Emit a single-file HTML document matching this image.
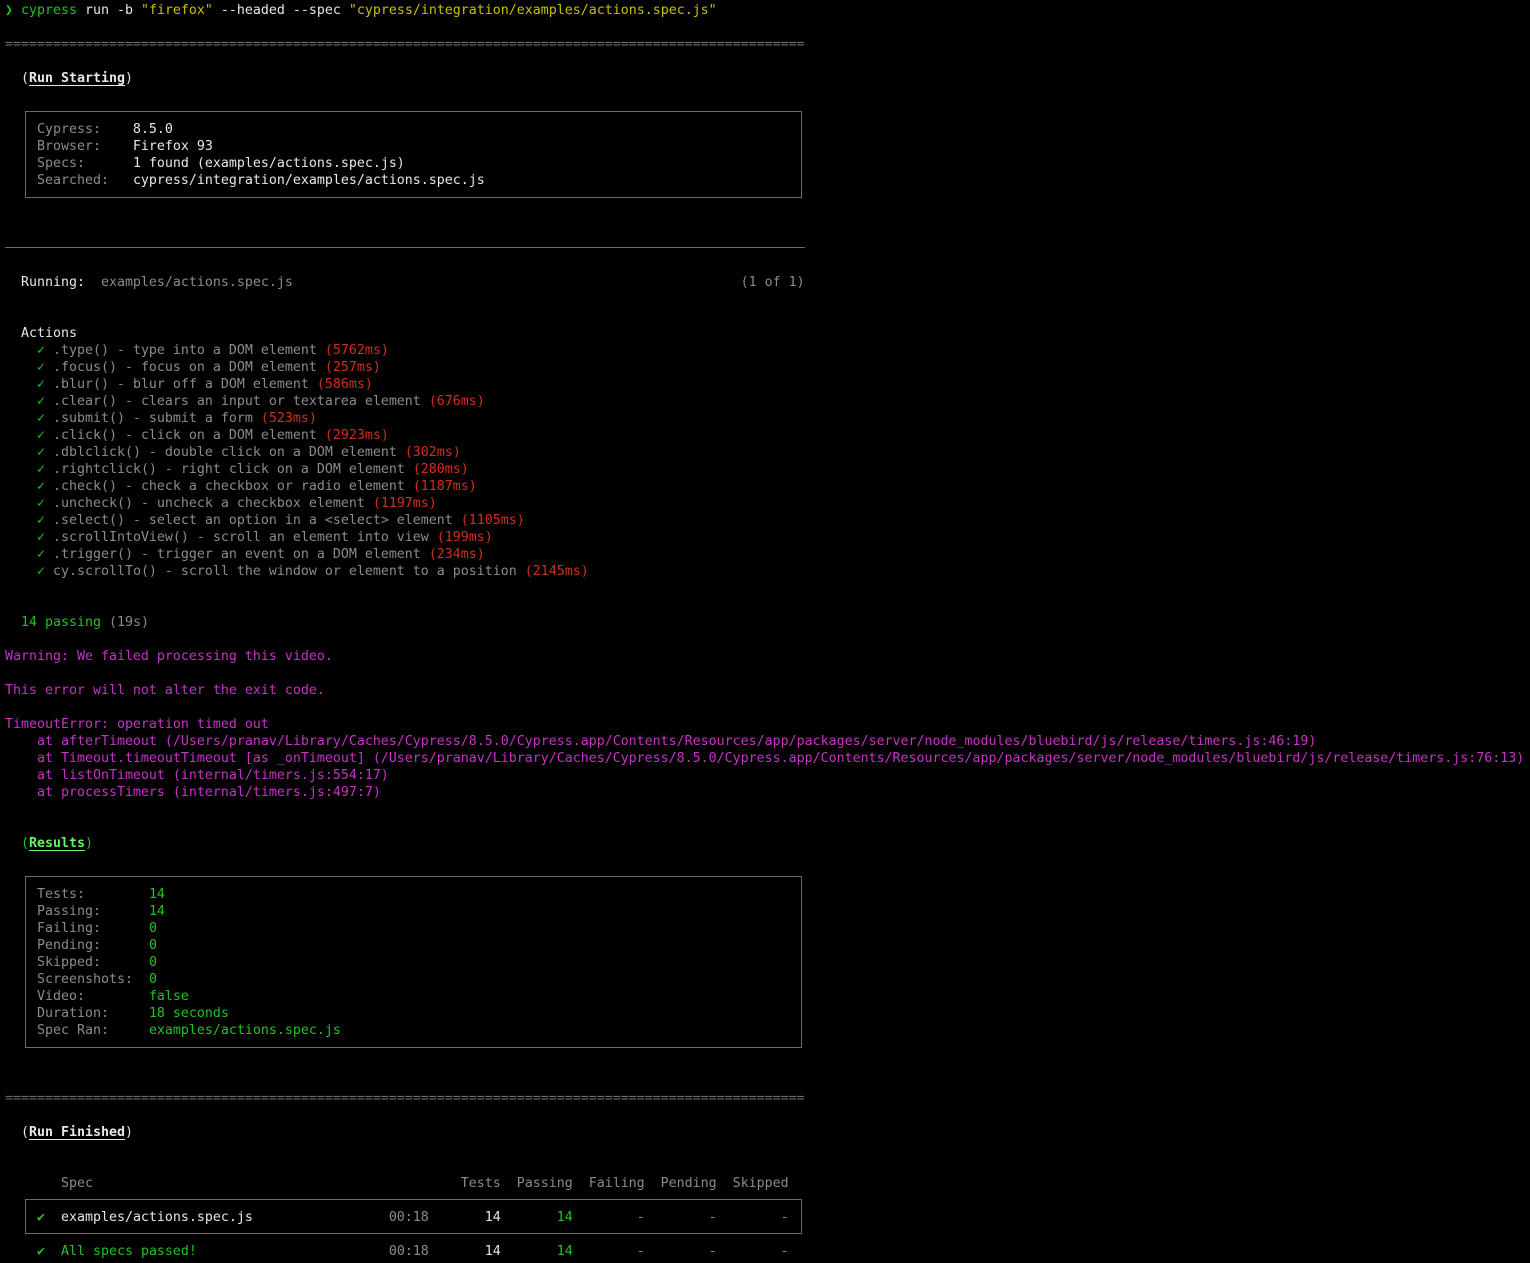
<!DOCTYPE html>
<html><head><meta charset="utf-8">
<style>
html,body{margin:0;padding:0;background:#000;width:1530px;height:1263px;overflow:hidden}
pre{position:absolute;left:5px;top:2px;margin:0;font-family:"DejaVu Sans Mono","Liberation Mono",monospace;font-size:13.29px;line-height:17px;color:#e8e8e8;white-space:pre}
.g{color:#8c8c8c}.gr{color:#22c322}.y{color:#c8c000}.r{color:#d0301c}.m{color:#c634c6}.d{color:#6e6e6e}
.b{font-weight:bold;text-decoration:underline;text-underline-offset:3px}
.bg{font-weight:bold;text-decoration:underline;color:#63f563;text-underline-offset:3px}
.box{position:absolute;border:1px solid #6a6a6a;box-sizing:border-box}
.sep{position:absolute;left:5px;width:800px;height:1px;background:#6a6a6a}
</style></head><body>
<div class="box" style="left:25px;top:111px;width:777px;height:87px"></div>
<div class="sep" style="top:247px"></div>
<div class="box" style="left:25px;top:876px;width:777px;height:172px"></div>
<div class="box" style="left:25px;top:1199px;width:777px;height:35px"></div>
<pre><span class="gr">❯</span> <span class="gr">cypress</span> run -b <span class="y">"firefox"</span> --headed --spec <span class="y">"cypress/integration/examples/actions.spec.js"</span>

<span class="d">====================================================================================================</span>

  (<span class="b">Run Starting</span>)


    <span class="g">Cypress:</span>    8.5.0
    <span class="g">Browser:</span>    Firefox 93
    <span class="g">Specs:</span>      1 found (examples/actions.spec.js)
    <span class="g">Searched:</span>   cypress/integration/examples/actions.spec.js





  Running:  <span class="g">examples/actions.spec.js</span>                                                        <span class="g">(1 of 1)</span>


  Actions
    <span class="gr">✓</span> <span class="g">.type() - type into a DOM element</span> <span class="r">(5762ms)</span>
    <span class="gr">✓</span> <span class="g">.focus() - focus on a DOM element</span> <span class="r">(257ms)</span>
    <span class="gr">✓</span> <span class="g">.blur() - blur off a DOM element</span> <span class="r">(586ms)</span>
    <span class="gr">✓</span> <span class="g">.clear() - clears an input or textarea element</span> <span class="r">(676ms)</span>
    <span class="gr">✓</span> <span class="g">.submit() - submit a form</span> <span class="r">(523ms)</span>
    <span class="gr">✓</span> <span class="g">.click() - click on a DOM element</span> <span class="r">(2923ms)</span>
    <span class="gr">✓</span> <span class="g">.dblclick() - double click on a DOM element</span> <span class="r">(302ms)</span>
    <span class="gr">✓</span> <span class="g">.rightclick() - right click on a DOM element</span> <span class="r">(280ms)</span>
    <span class="gr">✓</span> <span class="g">.check() - check a checkbox or radio element</span> <span class="r">(1187ms)</span>
    <span class="gr">✓</span> <span class="g">.uncheck() - uncheck a checkbox element</span> <span class="r">(1197ms)</span>
    <span class="gr">✓</span> <span class="g">.select() - select an option in a &lt;select&gt; element</span> <span class="r">(1105ms)</span>
    <span class="gr">✓</span> <span class="g">.scrollIntoView() - scroll an element into view</span> <span class="r">(199ms)</span>
    <span class="gr">✓</span> <span class="g">.trigger() - trigger an event on a DOM element</span> <span class="r">(234ms)</span>
    <span class="gr">✓</span> <span class="g">cy.scrollTo() - scroll the window or element to a position</span> <span class="r">(2145ms)</span>


  <span class="gr">14 passing</span> <span class="g">(19s)</span>

<span class="m">Warning: We failed processing this video.</span>

<span class="m">This error will not alter the exit code.</span>

<span class="m">TimeoutError: operation timed out</span>
<span class="m">    at afterTimeout (/Users/pranav/Library/Caches/Cypress/8.5.0/Cypress.app/Contents/Resources/app/packages/server/node_modules/bluebird/js/release/timers.js:46:19)</span>
<span class="m">    at Timeout.timeoutTimeout [as _onTimeout] (/Users/pranav/Library/Caches/Cypress/8.5.0/Cypress.app/Contents/Resources/app/packages/server/node_modules/bluebird/js/release/timers.js:76:13)</span>
<span class="m">    at listOnTimeout (internal/timers.js:554:17)</span>
<span class="m">    at processTimers (internal/timers.js:497:7)</span>


  <span class="gr">(</span><span class="bg">Results</span><span class="gr">)</span>


    <span class="g">Tests:</span>        <span class="gr">14</span>
    <span class="g">Passing:</span>      <span class="gr">14</span>
    <span class="g">Failing:</span>      <span class="gr">0</span>
    <span class="g">Pending:</span>      <span class="gr">0</span>
    <span class="g">Skipped:</span>      <span class="gr">0</span>
    <span class="g">Screenshots:</span>  <span class="gr">0</span>
    <span class="g">Video:</span>        <span class="gr">false</span>
    <span class="g">Duration:</span>     <span class="gr">18 seconds</span>
    <span class="g">Spec Ran:</span>     <span class="gr">examples/actions.spec.js</span>



<span class="d">====================================================================================================</span>

  (<span class="b">Run Finished</span>)


<span class="g">       Spec                                              Tests  Passing  Failing  Pending  Skipped</span>

    <span class="gr">✔</span>  examples/actions.spec.js                 <span class="g">00:18</span>       14       <span class="gr">14</span>        <span class="g">-</span>        <span class="g">-</span>        <span class="g">-</span>

    <span class="gr">✔</span>  <span class="gr">All specs passed!</span>                        <span class="g">00:18</span>       14       <span class="gr">14</span>        <span class="g">-</span>        <span class="g">-</span>        <span class="g">-</span>
</pre>
</body></html>
